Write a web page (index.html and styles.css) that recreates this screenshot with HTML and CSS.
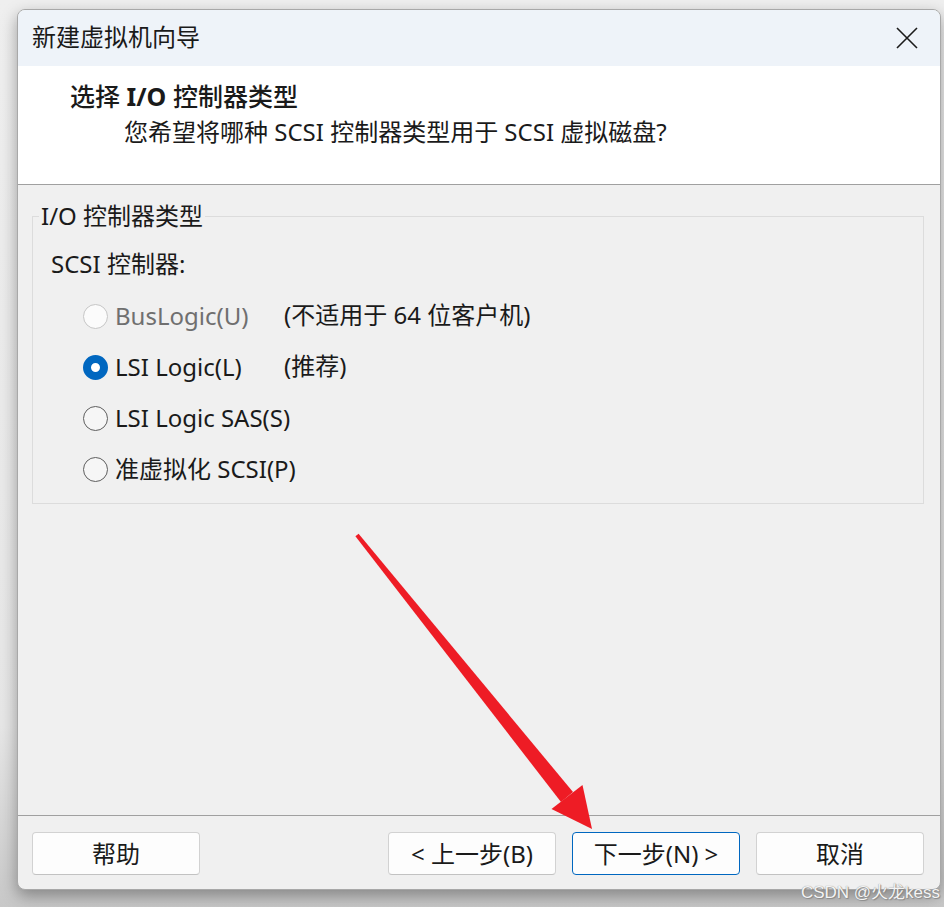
FILE: index.html
```html
<!DOCTYPE html>
<html lang="zh-CN">
<head>
<meta charset="utf-8">
<title>新建虚拟机向导</title>
<link rel="stylesheet" href="styles.css">
</head>
<body>
<div class="window">
  <div class="titlebar">
    <span class="title">新建虚拟机向导</span>
    <svg class="close" width="22" height="22" viewBox="0 0 22 22"><path d="M1 1 L21 21 M21 1 L1 21" stroke="#1b1b1b" stroke-width="1.6" fill="none"/></svg>
  </div>
  <div class="header">
    <div class="heading">选择 <b>I/O</b> 控制器类型</div>
    <div class="subtitle">您希望将哪种 SCSI 控制器类型用于 SCSI 虚拟磁盘?</div>
  </div>
  <div class="content">
    <fieldset class="group">
      <legend>I/O 控制器类型</legend>
      <div class="group-label">SCSI 控制器:</div>
      <div class="options">
        <div class="opt disabled"><span class="radio"></span><span class="opt-text">BusLogic(U)</span></div>
        <div class="note">(不适用于 64 位客户机)</div>
        <div class="opt"><span class="radio checked"></span><span class="opt-text">LSI Logic(L)</span></div>
        <div class="note">(推荐)</div>
        <div class="opt"><span class="radio"></span><span class="opt-text">LSI Logic SAS(S)</span></div>
        <div class="note"></div>
        <div class="opt"><span class="radio"></span><span class="opt-text">准虚拟化 SCSI(P)</span></div>
        <div class="note"></div>
      </div>
    </fieldset>
  </div>
  <div class="footer">
    <button class="btn">帮助</button>
    <div class="spacer"></div>
    <button class="btn">&lt; 上一步(B)</button>
    <button class="btn primary">下一步(N) &gt;</button>
    <button class="btn">取消</button>
  </div>
</div>
<svg class="arrow" width="944" height="907" viewBox="0 0 944 907">
  <polygon points="355.4,536.3 358.6,533.7 573,792 561,802" fill="#ee1c25"/>
  <polygon points="551.5,809 582.5,785 592,829" fill="#ee1c25"/>
</svg>
<div class="watermark">CSDN @火龙kess</div>
</body>
</html>
```
FILE: styles.css
```css
html, body {
  margin: 0;
  padding: 0;
}
body {
  width: 944px;
  height: 907px;
  overflow: hidden;
  background: linear-gradient(#efefef 0%, #e6e6e6 80%, #c8c8c8 100%);
  font-family: "Noto Sans", "Noto Sans CJK SC", sans-serif;
  font-size: 24px;
  color: #1a1a1a;
  position: relative;
}
.window {
  margin: 9px 0 0 17px;
  width: 922px;
  height: 879px;
  border: 1px solid #a8a8a8;
  border-radius: 8px;
  overflow: hidden;
  background: #f0f0f0;
  box-shadow: 0 6px 16px rgba(0,0,0,0.35);
  display: flex;
  flex-direction: column;
}
.titlebar {
  height: 56px;
  flex: none;
  background: #eef3f9;
  display: flex;
  align-items: center;
  padding: 0 22px 0 14px;
}
.title {
  flex: 1;
  line-height: 30px;
  margin-top: -2px;
}
.close {
  display: block;
  margin-top: -1px;
}
.header {
  flex: none;
  background: #ffffff;
  border-bottom: 1px solid #a0a0a0;
  box-sizing: border-box;
  height: 119px;
  padding-top: 14px;
}
.heading {
  margin-left: 52px;
  line-height: 32px;
  font-weight: 500;
  font-size: 25px;
}
.heading b {
  font-weight: 700;
}
.subtitle {
  margin-left: 106px;
  margin-top: 4px;
  line-height: 32px;
}
.content {
  flex: 1;
  padding: 16px 16px 0 14px;
  border-bottom: 1px solid #a0a0a0;
}
.group {
  margin: 0;
  padding: 0 0 8px 18px;
  border: 1px solid #dcdcdc;
  min-width: 0;
}
.group legend {
  margin-left: -12px;
  padding: 0 2px;
  line-height: 30px;
}
.group-label {
  margin-top: 17px;
  line-height: 32px;
}
.options {
  margin-top: 11px;
  margin-left: 32px;
  display: grid;
  grid-template-columns: 201px 1fr;
  grid-auto-rows: 51px;
  align-items: center;
}
.opt {
  display: flex;
  align-items: center;
  gap: 7px;
  white-space: nowrap;
}
.opt-text, .note {
  line-height: 32px;
  margin-top: -2px;
  white-space: nowrap;
}
.note {
  margin-top: -4px;
}
.radio {
  width: 25px;
  height: 25px;
  box-sizing: border-box;
  border-radius: 50%;
  border: 1.5px solid #5e5e5e;
  background: #f6f6f6;
  flex: none;
}
.radio.checked {
  border: 8px solid #0067c0;
  background: #ffffff;
}
.opt.disabled .radio {
  border-color: #c6c6c6;
  background: #fbfbfb;
}
.opt.disabled .opt-text {
  color: #6f6f6f;
}
.footer {
  height: 73px;
  flex: none;
  box-sizing: border-box;
  padding: 16px 16px 0 14px;
  display: flex;
  gap: 16px;
  align-items: flex-start;
}
.spacer {
  flex: 1;
}
.btn {
  width: 168px;
  height: 43px;
  background: #fdfdfd;
  border: 1px solid #d2d2d2;
  border-bottom-color: #c2c2c2;
  border-radius: 4px;
  font-family: "Noto Sans", "Noto Sans CJK SC", sans-serif;
  font-size: 24px;
  color: #1a1a1a;
  padding: 0;
  line-height: 30px;
}
.btn.primary {
  border-color: #0067c0;
}
.arrow {
  position: absolute;
  left: 0;
  top: 0;
  pointer-events: none;
}
.watermark {
  position: absolute;
  right: 4px;
  bottom: 4px;
  font-family: "Liberation Sans", "Noto Sans CJK SC", sans-serif;
  font-size: 17px;
  color: #f4f4f4;
  text-shadow: 0 0 1px #7a7a7a, 1px 1px 1px #8a8a8a;
  line-height: 20px;
}
```
